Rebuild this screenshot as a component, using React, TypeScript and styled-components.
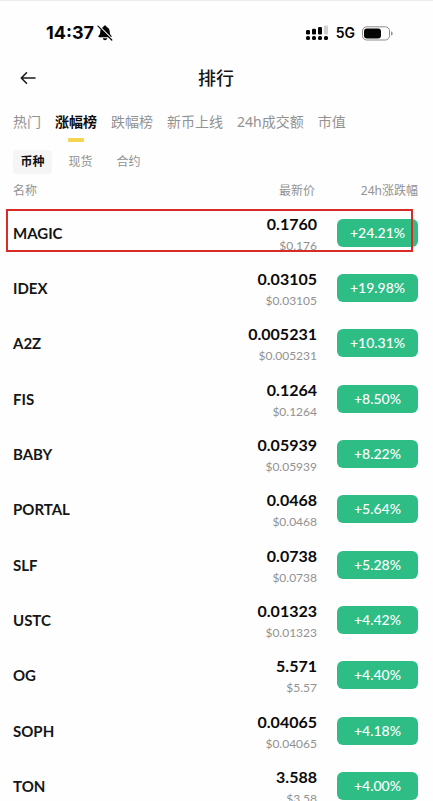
import React, { useState } from "react";
import styled, { createGlobalStyle } from "styled-components";

const GlobalStyle = createGlobalStyle`
  *, *::before, *::after { box-sizing: border-box; }
  body {
    margin: 0;
    background: #fefefe;
    color: #151617;
    font-family: "Noto Sans", "Noto Sans CJK SC", sans-serif;
  }
  button {
    margin: 0;
    padding: 0;
    border: 0;
    background: none;
    font: inherit;
    color: inherit;
    cursor: pointer;
  }
`;

const Screen = styled.main`
  height: 100vh;
  overflow: hidden;
  border-top: 1px solid #ebebeb;
`;

const StatusBar = styled.div`
  display: flex;
  align-items: center;
  justify-content: space-between;
  height: 48px;
  padding: 16px 40px 0 46px;
  font-family: Inter, sans-serif;
  color: #050505;
`;

const StatusGroup = styled.div<{ $gap: number }>`
  display: flex;
  align-items: center;
  gap: ${(p) => p.$gap}px;
`;

const Clock = styled.time`
  font-size: 18px;
  line-height: 20px;
  font-weight: 700;
`;

const Network = styled.span`
  font-size: 14px;
  line-height: 20px;
  font-weight: 600;
`;

const TitleBar = styled.header`
  display: grid;
  grid-template-columns: 24px 1fr 24px;
  align-items: center;
  height: 58px;
  padding: 0 17px 0 16px;
`;

const BackButton = styled.button`
  display: flex;
  width: 24px;
  height: 24px;
  align-items: center;
  justify-content: center;
`;

const Title = styled.h1`
  margin: 0;
  font-size: 18px;
  line-height: 24px;
  font-weight: 500;
  text-align: center;
`;

const Tabs = styled.nav`
  display: flex;
  gap: 14px;
  height: 36px;
  padding: 5px 13px 0;
`;

const Tab = styled.button<{ $active: boolean }>`
  display: flex;
  flex-direction: column;
  align-items: center;
  gap: 6px;
  white-space: nowrap;
  font-size: 14px;
  line-height: 20px;
  font-weight: ${(p) => (p.$active ? 700 : 400)};
  color: ${(p) => (p.$active ? "#0b0b0c" : "#929292")};

  &::after {
    content: "";
    width: 16px;
    height: 4px;
    border-radius: 1px;
    background: ${(p) => (p.$active ? "#f3d54f" : "transparent")};
  }
`;

const Filters = styled.div`
  display: flex;
  gap: 9px;
  padding: 7px 13px 0;
`;

const Filter = styled.button<{ $active: boolean }>`
  width: 39px;
  height: 24px;
  border-radius: 4px;
  font-size: 12px;
  line-height: 24px;
  font-weight: ${(p) => (p.$active ? 700 : 400)};
  color: ${(p) => (p.$active ? "#111" : "#929292")};
  background: ${(p) => (p.$active ? "#f5f5f5" : "transparent")};
`;

const Table = styled.table`
  width: 100%;
  border-collapse: collapse;
  table-layout: fixed;
`;

const HeadCell = styled.th<{ $kind: "name" | "price" | "change" }>`
  width: ${(p) => (p.$kind === "name" ? "auto" : p.$kind === "price" ? "120px" : "116px")};
  height: 31px;
  padding: ${(p) => (p.$kind === "name" ? "2px 0 0 13px" : p.$kind === "change" ? "2px 15px 0 0" : "2px 2px 0 0")};
  font-size: 12px;
  line-height: 16px;
  font-weight: 400;
  text-align: ${(p) => (p.$kind === "name" ? "left" : "right")};
  color: #929292;
`;

const Row = styled.tr`
  position: relative;
  height: 55px;

  &:nth-child(3n) { height: 56px; }
`;

const Marker = styled.span`
  position: absolute;
  inset: 4px 20px 8px 6px;
  border: 2px solid #d92b25;
  pointer-events: none;
`;

const NameCell = styled.th`
  padding: 0 0 0 13px;
  font-family: Lato, sans-serif;
  font-size: 15px;
  line-height: 20px;
  font-weight: 700;
  text-align: left;
`;

const PriceCell = styled.td`
  padding: 2px 0 0;
  font-family: Lato, sans-serif;
  text-align: right;
`;

const Price = styled.div`
  font-size: 16px;
  line-height: 20px;
  font-weight: 700;
  color: #0b0b0c;
`;

const Fiat = styled.div`
  margin-top: 4px;
  font-size: 12px;
  line-height: 16px;
  color: #929292;
`;

const ChangeCell = styled.td`
  padding: 0 15px 0 20px;
`;

const Change = styled.div`
  height: 28px;
  border-radius: 6px;
  background: #2ebd85;
  color: #fff;
  font-family: Lato, sans-serif;
  font-size: 14px;
  line-height: 28px;
  font-weight: 500;
  text-align: center;
`;

const MutedBell = () => (
  <svg width="16" height="16" viewBox="0 0 16 16" aria-label="静音" role="img">
    <path
      d="M8 .6c-.9 0-1.500.6-1.600 1.300C4.300 2.500 3.400 4.200 3.300 6.300c-.1 2.300-.5 3.400-1.700 4.500-.5.5-.3 1.400.5 1.400h11.800c.8 0 1-.9.500-1.400-1.200-1.100-1.600-2.200-1.700-4.500-.1-2.100-1-3.800-3.100-4.400C9.500 1.200 8.900.6 8 .6zM5.800 13.200c.2 1.200 1.100 2 2.200 2s2-.8 2.200-2z"
      fill="#050505"
    />
    <path d="M1.800 .9 15.200 14.300" stroke="#fefefe" strokeWidth="1.600" />
    <path d="M1 1.200 14.800 15" stroke="#050505" strokeWidth="1.200" strokeLinecap="round" />
  </svg>
);

const Signal = () => (
  <svg width="23" height="16" viewBox="0 0 23 16" aria-label="信号" role="img">
    <g fill="#050505">
      <rect x="0" y="5" width="4" height="4.500" rx="1.300" />
      <rect x="6" y="3.800" width="4" height="5.700" rx="1.300" />
      <rect x="12" y="2" width="4" height="7.500" rx="1.300" />
      <rect x="0" y="11" width="4" height="4" rx="1.600" />
      <rect x="6" y="11" width="4" height="4" rx="1.600" />
      <rect x="12" y="11" width="4" height="4" rx="1.600" />
      <rect x="18" y="11" width="4" height="4" rx="1.600" />
    </g>
    <rect x="18" y=".5" width="4" height="9" rx="1.300" fill="#d0d0d0" />
  </svg>
);

const Battery = () => (
  <svg width="31" height="15" viewBox="0 0 31 15" aria-label="电量" role="img">
    <rect x=".5" y=".8" width="27" height="13.200" rx="4.200" fill="none" stroke="#8c8c8c" />
    <rect x="2" y="2.400" width="17" height="10" rx="3" fill="#050505" />
    <path d="M29 5.200c1.300.5 1.700 1.300 1.700 2.200s-.4 1.700-1.700 2.200z" fill="#929292" />
  </svg>
);

const BackArrow = () => (
  <svg width="16" height="14" viewBox="0 0 16 14" fill="none" stroke="#1c1c1c" strokeWidth="1.600" strokeLinecap="round" strokeLinejoin="round">
    <path d="M15 7H1.500M6.500 1.800 1.300 7l5.200 5.200" />
  </svg>
);

const tabs = ["热门", "涨幅榜", "跌幅榜", "新币上线", "24h成交额", "市值"];
const filters = ["币种", "现货", "合约"];

const coins = [
  { name: "MAGIC", price: "0.1760", fiat: "$0.176", change: "+24.21%", marked: true },
  { name: "IDEX", price: "0.03105", fiat: "$0.03105", change: "+19.98%" },
  { name: "A2Z", price: "0.005231", fiat: "$0.005231", change: "+10.31%" },
  { name: "FIS", price: "0.1264", fiat: "$0.1264", change: "+8.50%" },
  { name: "BABY", price: "0.05939", fiat: "$0.05939", change: "+8.22%" },
  { name: "PORTAL", price: "0.0468", fiat: "$0.0468", change: "+5.64%" },
  { name: "SLF", price: "0.0738", fiat: "$0.0738", change: "+5.28%" },
  { name: "USTC", price: "0.01323", fiat: "$0.01323", change: "+4.42%" },
  { name: "OG", price: "5.571", fiat: "$5.57", change: "+4.40%" },
  { name: "SOPH", price: "0.04065", fiat: "$0.04065", change: "+4.18%" },
  { name: "TON", price: "3.588", fiat: "$3.58", change: "+4.00%" },
];

export default function App() {
  const [tab, setTab] = useState("涨幅榜");
  const [filter, setFilter] = useState("币种");

  return (
    <Screen>
      <GlobalStyle />
      <StatusBar>
        <StatusGroup $gap={3}>
          <Clock>14:37</Clock>
          <MutedBell />
        </StatusGroup>
        <StatusGroup $gap={7}>
          <Signal />
          <Network>5G</Network>
          <Battery />
        </StatusGroup>
      </StatusBar>
      <TitleBar>
        <BackButton aria-label="返回">
          <BackArrow />
        </BackButton>
        <Title>排行</Title>
      </TitleBar>
      <Tabs>
        {tabs.map((label) => (
          <Tab key={label} $active={label === tab} onClick={() => setTab(label)}>
            {label}
          </Tab>
        ))}
      </Tabs>
      <Filters>
        {filters.map((label) => (
          <Filter key={label} $active={label === filter} onClick={() => setFilter(label)}>
            {label}
          </Filter>
        ))}
      </Filters>
      <Table>
        <thead>
          <tr>
            <HeadCell $kind="name" scope="col">名称</HeadCell>
            <HeadCell $kind="price" scope="col">最新价</HeadCell>
            <HeadCell $kind="change" scope="col">24h涨跌幅</HeadCell>
          </tr>
        </thead>
        <tbody>
          {coins.map((coin) => (
            <Row key={coin.name}>
              <NameCell scope="row">
                {coin.name}
                {coin.marked && <Marker />}
              </NameCell>
              <PriceCell>
                <Price>{coin.price}</Price>
                <Fiat>{coin.fiat}</Fiat>
              </PriceCell>
              <ChangeCell>
                <Change>{coin.change}</Change>
              </ChangeCell>
            </Row>
          ))}
        </tbody>
      </Table>
    </Screen>
  );
}
